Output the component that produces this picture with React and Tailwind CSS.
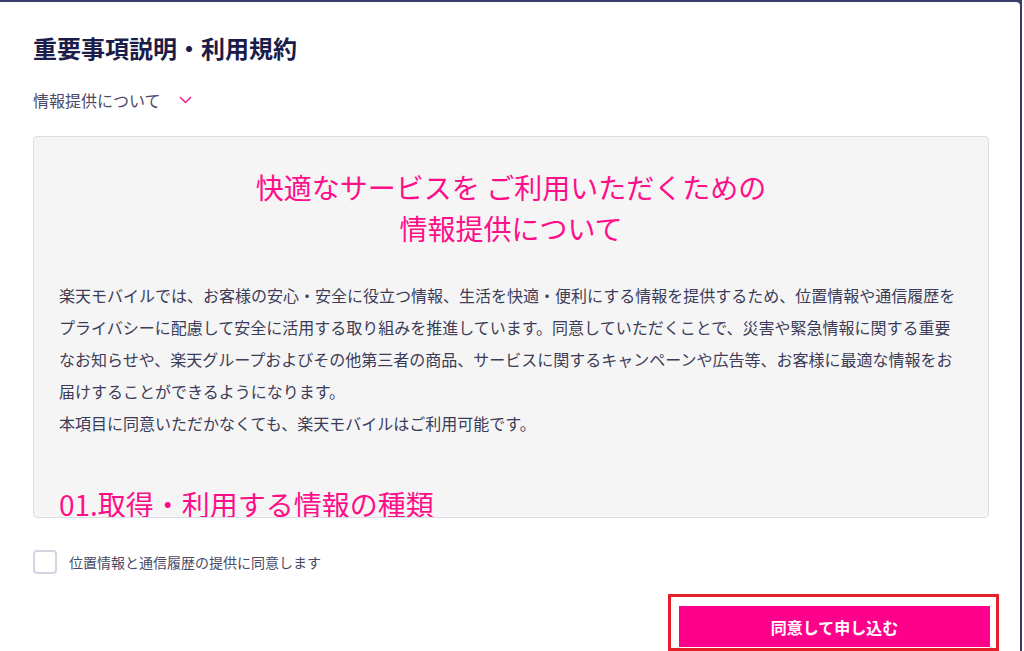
export default function App() {
  const body = [
    "楽天モバイルでは、お客様の安心・安全に役立つ情報、生活を快適・便利にする情報を提供するため、位置情報や通信履歴を",
    "プライバシーに配慮して安全に活用する取り組みを推進しています。同意していただくことで、災害や緊急情報に関する重要",
    "なお知らせや、楽天グループおよびその他第三者の商品、サービスに関するキャンペーンや広告等、お客様に最適な情報をお",
    "届けすることができるようになります。",
    "本項目に同意いただかなくても、楽天モバイルはご利用可能です。",
  ];
  return (
    <div
      className="w-[1024px] h-[651px] bg-white flex overflow-hidden"
      style={{ fontFamily: '"Noto Sans CJK JP", "Noto Sans", sans-serif' }}
    >
      <div className="w-[1022px] h-full bg-[#3b3c6c] pt-[2px] pr-[2px] flex">
        <div className="w-[1020px] h-full bg-white rounded-tr-[4px] flex flex-col pl-[33px] pr-[31px] pt-[30px]">
          <h1 className="text-[24px] leading-[32px] font-bold text-[#1c1c4a]">
            重要事項説明・利用規約
          </h1>
          <div className="mt-[24px] flex items-center h-[24px]">
            <span className="text-[16px] text-[#4a4a66]">情報提供について</span>
            <svg className="ml-[18px]" width="13" height="8" viewBox="0 0 13 8" fill="none">
              <path d="M1 1 L6.5 6.5 L12 1" stroke="#ff0e8a" strokeWidth="1.4" />
            </svg>
          </div>
          <div className="mt-[24px] h-[382px] shrink-0 bg-[#f5f5f5] border border-[#dcdce6] rounded-[4px] overflow-hidden px-[25px]">
            <div className="pt-[30px] text-center text-[28px] leading-[41px] text-[#ff0e8a]">
              <div>快適なサービスを ご利用いただくための</div>
              <div>情報提供について</div>
            </div>
            <div className="mt-[30px] text-[16px] leading-[32px] text-[#3c3c58] whitespace-nowrap">
              {body.map((l, i) => (
                <div key={i}>{l}</div>
              ))}
            </div>
            <div className="mt-[45px] text-[28px] leading-[41px] text-[#ff0e8a]">
              01.取得・利用する情報の種類
            </div>
          </div>
          <div className="mt-[32px] flex items-center gap-[12px]">
            <div className="w-[24px] h-[24px] rounded-[4px] border-2 border-[#d4d4e2] bg-white" />
            <span className="text-[14px] text-[#4a4a66]">位置情報と通信履歴の提供に同意します</span>
          </div>
          <div className="mt-[20px] flex justify-end mr-[-10px]">
            <div className="w-[331px] h-[57px] shrink-0 border-[3px] border-[#e4202a] pl-[8px] pr-[6px] pt-[9px] flex flex-col">
              <button className="w-full h-[41px] bg-[#ff008c] text-white font-bold text-[16px] flex items-center justify-center">
                同意して申し込む
              </button>
            </div>
          </div>
        </div>
      </div>
    </div>
  );
}
